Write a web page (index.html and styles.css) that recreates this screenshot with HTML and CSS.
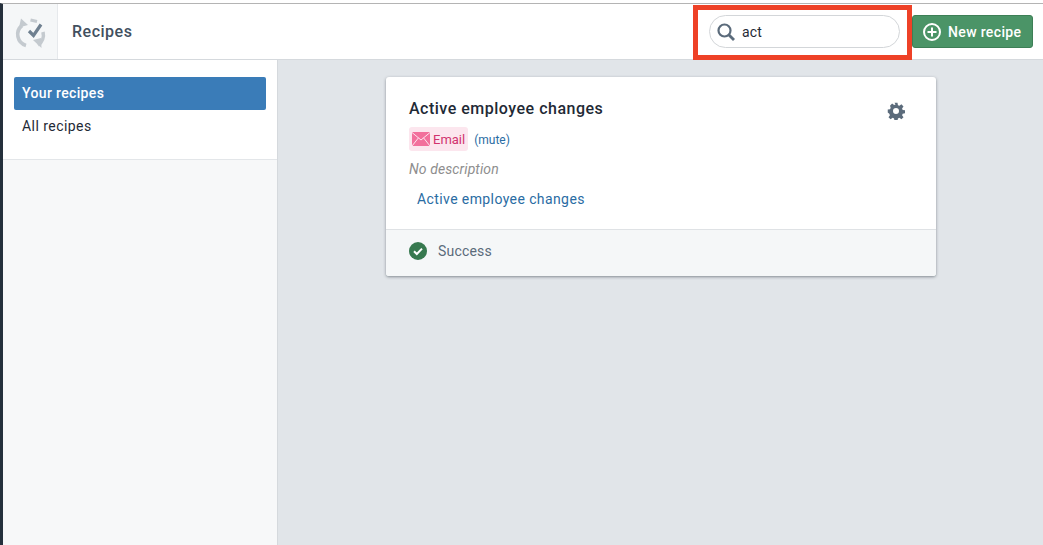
FILE: index.html
```
<!DOCTYPE html>
<html lang="en">
<head>
  <meta charset="UTF-8">
  <title>Recipes</title>
  <link rel="stylesheet" href="styles.css">
</head>
<body>
  <div class="app">
    <header class="topbar">
      <div class="logo-cell">
        <svg class="logo" viewBox="-1 -1 38 38" width="38" height="38">
          <path d="M10 11.500A11.500 11.500 0 0 0 14 31.500" fill="none" stroke="#c4cacf" stroke-width="3.600"/>
          <path d="M9 4.500l7 6.500-9 2.500z" fill="#c4cacf"/>
          <path d="M18.500 6l6.500 1.500" fill="none" stroke="#c4cacf" stroke-width="3.200"/>
          <path d="M31 18A12 12 0 0 1 26 31" fill="none" stroke="#c4cacf" stroke-width="3.600"/>
          <path d="M21 26l8-2 .5 10z" fill="#c4cacf"/>
          <path d="M17 17l4.500 4.500 7.500-11" fill="none" stroke="#6f8090" stroke-width="3.200"/>
        </svg>
      </div>
      <h1 class="page-title">Recipes</h1>
      <div class="search-box">
        <div class="search-field">
          <svg viewBox="0 0 18 18" width="18" height="18">
            <circle cx="7.500" cy="7.500" r="6" fill="none" stroke="#5b6b7b" stroke-width="2.200"/>
            <path d="M12 12l5 5" stroke="#5b6b7b" stroke-width="2.800"/>
          </svg>
          <span>act</span>
        </div>
      </div>
      <a class="new-btn">
        <svg viewBox="0 0 20 20" width="20" height="20">
          <circle cx="10" cy="10" r="8" fill="none" stroke="#fff" stroke-width="2"/>
          <path d="M10 5.500v9M5.500 10h9" stroke="#fff" stroke-width="2"/>
        </svg>
        New recipe
      </a>
    </header>
    <div class="main">
      <aside class="sidebar">
        <nav class="side-nav">
          <a class="side-item active">Your recipes</a>
          <a class="side-item">All recipes</a>
        </nav>
      </aside>
      <section class="content">
        <article class="card">
          <div class="card-body">
            <div class="card-head">
              <h2 class="card-title">Active employee changes</h2>
              <svg class="gear" viewBox="0 0 24 24" width="18" height="18">
                <path fill="#5b6b7b" fill-rule="evenodd" d="M10 1h4l.6 3.200 1.900.8 2.700-1.900 2.800 2.800-1.900 2.700.8 1.900 3.100.5v4l-3.100.6-.8 1.900 1.900 2.700-2.800 2.800-2.700-1.900-1.900.8-.6 3.100h-4l-.6-3.100-1.900-.8-2.700 1.900-2.800-2.800 1.900-2.700-.8-1.900L1 14v-4l3.100-.5.8-1.900L4 4.900l2.800-2.800 2.700 1.900 1.900-.8zM12 8a4 4 0 1 0 0 8 4 4 0 0 0 0-8z"/>
              </svg>
            </div>
            <div class="tag-row">
              <span class="tag">
                <svg viewBox="0 0 18 14" width="18" height="14">
                  <rect width="18" height="14" fill="#f2709c"/>
                  <path d="M0 .5l9 7.500 9-7.500M0 14l6.500-8.200M18 14l-6.500-8.200" fill="none" stroke="#fde4ee" stroke-width="1"/>
                </svg>
                Email
              </span>
              <a class="mute">(mute)</a>
            </div>
            <p class="desc">No description</p>
            <a class="recipe-link">Active employee changes</a>
          </div>
          <footer class="card-foot">
            <svg viewBox="0 0 18 18" width="18" height="18">
              <circle cx="9" cy="9" r="9" fill="#37794f"/>
              <path d="M5 9.200l2.800 2.800 5.200-5.400" fill="none" stroke="#fff" stroke-width="2"/>
            </svg>
            <span>Success</span>
          </footer>
        </article>
      </section>
    </div>
  </div>
</body>
</html>
```

FILE: styles.css
```
html, body {
  margin: 0;
  height: 100%;
  overflow: hidden;
}
body {
  font-family: "Roboto", "Liberation Sans", sans-serif;
  font-size: 14px;
  color: #1f2a36;
  background-color: #fff;
  padding-top: 3px;
  box-sizing: border-box;
}
h1, h2, p {
  margin: 0;
}
.app {
  height: 100%;
  display: flex;
  flex-direction: column;
  border-top: 1px solid #b4b4b4;
  border-left: 3px solid #25303c;
  box-sizing: border-box;
}
.topbar {
  height: 55px;
  flex: none;
  display: flex;
  align-items: center;
  border-bottom: 1px solid #d5d9dd;
  background-color: #fff;
}
.logo-cell {
  width: 54px;
  height: 100%;
  flex: none;
  display: flex;
  align-items: center;
  justify-content: center;
  background-color: #f5f7f8;
  border-right: 1px solid #e6e9ec;
}
.page-title {
  margin-left: 14px;
  font-size: 16px;
  font-weight: 500;
  letter-spacing: 0.5px;
  color: #42505f;
}
.search-box {
  margin-left: auto;
  align-self: flex-start;
  width: 219px;
  height: 55px;
  margin-top: 1px;
  padding: 5px 7px 0 11px;
  box-sizing: border-box;
  border: 5px solid #ee4127;
  background-color: #fff;
}
.search-field {
  height: 33px;
  box-sizing: border-box;
  border: 1px solid #d3d6d9;
  border-radius: 17px;
  display: flex;
  align-items: center;
  gap: 7px;
  padding-left: 7px;
  font-size: 14px;
  letter-spacing: 0.2px;
}
.new-btn {
  margin-right: 10px;
  padding-left: 9px;
  width: 121px;
  height: 33px;
  box-sizing: border-box;
  display: flex;
  align-items: center;
  gap: 6px;
  background-color: #4b9467;
  border: 1px solid #3d7f56;
  border-radius: 3px;
  color: #fff;
  font-weight: 500;
  letter-spacing: 0.35px;
}
.main {
  flex: 1;
  display: flex;
  min-height: 0;
}
.sidebar {
  width: 274px;
  flex: none;
  background-color: #f7f8f9;
  border-right: 1px solid #d5d9dd;
}
.side-nav {
  height: 100px;
  padding: 17px 11px 0;
  box-sizing: border-box;
  display: flex;
  flex-direction: column;
  background-color: #fff;
  border-bottom: 1px solid #e3e6e9;
}
.side-item {
  height: 33px;
  padding: 0 0 2px 8px;
  box-sizing: border-box;
  display: flex;
  align-items: center;
  border-radius: 2px;
  color: #1f2a36;
  letter-spacing: 0.45px;
}
.side-item.active {
  background-color: #3a7cb8;
  color: #fff;
  font-weight: 500;
  letter-spacing: 0.35px;
}
.content {
  flex: 1;
  background-color: #e1e5e9;
  padding-top: 17px;
  padding-left: 108px;
}
.card {
  width: 550px;
  background-color: #fff;
  border-radius: 3px;
  box-shadow: 0 1px 3px rgba(40, 50, 60, 0.5);
}
.card-body {
  height: 152px;
  box-sizing: border-box;
  padding: 21px 23px 0;
}
.card-head {
  display: flex;
  justify-content: space-between;
  align-items: flex-start;
  padding-right: 8px;
}
.gear {
  margin-top: 4px;
}
.card-title {
  margin-top: 1px;
  font-size: 16px;
  font-weight: 500;
  letter-spacing: 0.5px;
  color: #1f2a36;
}
.tag-row {
  margin-top: 7px;
  display: flex;
  align-items: center;
  gap: 6px;
}
.tag {
  height: 24px;
  padding: 0 3px;
  display: flex;
  align-items: center;
  gap: 3px;
  background-color: #fce6ee;
  border-radius: 3px;
  color: #d1336e;
  font-size: 13px;
}
.mute {
  margin-top: 1px;
  color: #2a6ca3;
  font-size: 12px;
}
.desc {
  margin-top: 10px;
  color: #8e8e8e;
  font-style: italic;
  letter-spacing: 0.1px;
}
.recipe-link {
  display: block;
  margin-top: 14px;
  margin-left: 8px;
  color: #2a6ca3;
  letter-spacing: 0.4px;
}
.card-foot {
  height: 47px;
  box-sizing: border-box;
  display: flex;
  align-items: center;
  gap: 11px;
  padding: 0 0 5px 23px;
  background-color: #f5f7f8;
  border-top: 1px solid #dfe2e5;
  border-radius: 0 0 3px 3px;
  color: #5b6b7b;
  letter-spacing: 0.2px;
}
```
